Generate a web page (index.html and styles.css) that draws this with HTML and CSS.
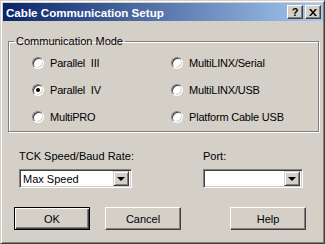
FILE: index.html
```html
<!DOCTYPE html>
<html lang="en">
<head>
  <meta charset="UTF-8">
  <title>Cable Communication Setup</title>
  <link rel="stylesheet" href="styles.css">
</head>
<body>
  <div class="window">
    <div class="titlebar">
      <span class="title">Cable Communication Setup</span>
      <div class="title-btns">
        <button class="cap-btn">?</button>
        <button class="cap-btn cap-close">
          <svg width="8" height="7" viewBox="0 0 8 7"><path d="M0 0h2l2 2.5L6 0h2L5 3.5 8 7H6L4 4.5 2 7H0l3-3.5z" fill="#000"/></svg>
        </button>
      </div>
    </div>

    <div class="content">
      <fieldset class="group">
        <legend>Communication Mode</legend>
        <div class="radio-grid">
          <label class="radio"><span class="dot"></span>Parallel&nbsp; III</label>
          <label class="radio"><span class="dot"></span>MultiLINX/Serial</label>
          <label class="radio"><span class="dot checked"></span>Parallel&nbsp; IV</label>
          <label class="radio"><span class="dot"></span>MultiLINX/USB</label>
          <label class="radio"><span class="dot"></span>MultiPRO</label>
          <label class="radio"><span class="dot"></span>Platform Cable USB</label>
        </div>
      </fieldset>

      <div class="fields">
        <div class="field field-speed">
          <div class="field-label">TCK Speed/Baud Rate:</div>
          <div class="combo combo-speed">
            <span class="combo-text">Max Speed</span>
            <span class="combo-arrow"></span>
          </div>
        </div>
        <div class="field field-port">
          <div class="field-label">Port:</div>
          <div class="combo combo-port">
            <span class="combo-text"></span>
            <span class="combo-arrow"></span>
          </div>
        </div>
      </div>

      <div class="buttons">
        <button class="btn btn-default">OK</button>
        <button class="btn">Cancel</button>
        <span class="spacer"></span>
        <button class="btn">Help</button>
      </div>
    </div>
  </div>
</body>
</html>
```

FILE: styles.css
```css
body {
  margin: 0;
  background: #d4d0c8;
  font-family: 'Liberation Sans', Arial, sans-serif;
  font-size: 11px;
  color: #000;
}
/* окно */
.window {
  width: 325px;
  height: 244px;
  box-sizing: border-box;
  background: #d4d0c8;
  border: 1px solid;
  border-color: #d4d0c8 #404040 #404040 #d4d0c8;
  box-shadow: inset 1px 1px #fff, inset -1px -1px #808080;
  padding: 2px 1px 1px 2px;
}
.titlebar {
  height: 18px;
  background: linear-gradient(to right, #0a246a, #a6caf0);
  display: flex;
  align-items: center;
  justify-content: space-between;
  padding: 0 2px 0 3px;
}
.title {
  color: #fff;
  font-weight: 700;
  font-size: 11.6px;
}
.title-btns {
  display: flex;
  gap: 2px;
}
.cap-btn {
  width: 16px;
  height: 14px;
  padding: 0;
  background: #d4d0c8;
  border: 1px solid;
  border-color: #fff #404040 #404040 #fff;
  box-shadow: inset -1px -1px #808080;
  font-family: 'Liberation Sans', Arial, sans-serif;
  font-weight: 700;
  font-size: 11px;
  line-height: 11px;
  display: flex;
  align-items: center;
  justify-content: center;
}
/* группа */
.content {
  padding: 0 4px 0 5px;
}
.group {
  margin: 14px 0 0 0;
  padding: 9px 0 3px 23px;
  border: 1px solid #808080;
  box-shadow: inset 1px 1px #fff, 1px 1px #fff;
  height: 97px;
  box-sizing: border-box;
}
.group legend {
  padding: 0 2px;
  margin-left: -18px;
}
.radio-grid {
  display: grid;
  grid-template-columns: 139px 1fr;
  row-gap: 14px;
}
.radio {
  display: flex;
  align-items: center;
  gap: 6px;
  height: 13px;
  letter-spacing: -0.2px;
}
.dot {
  width: 12px;
  height: 12px;
  box-sizing: border-box;
  border-radius: 50%;
  background: #fff;
  border: 1px solid;
  border-color: #808080 #fff #fff #808080;
  box-shadow: inset 1px 1px #404040, inset -1px -1px #d4d0c8;
  display: flex;
  align-items: center;
  justify-content: center;
}
.dot.checked::after {
  content: "";
  width: 4px;
  height: 4px;
  border-radius: 50%;
  background: #000;
}
/* поля */
.fields {
  display: flex;
  margin-top: 18px;
}
.field-speed {
  margin-left: 11px;
}
.field-port {
  margin-left: 69px;
}
.field-label {
  height: 14px;
  margin-bottom: 5px;
}
.combo {
  height: 19px;
  box-sizing: border-box;
  background: #fff;
  border: 1px solid;
  border-color: #808080 #fff #fff #808080;
  box-shadow: inset 1px 1px #404040, inset -1px -1px #d4d0c8;
  display: flex;
  align-items: center;
  padding: 2px;
}
.combo-speed { width: 113px; }
.combo-port { width: 100px; }
.combo-text {
  flex: 1;
  padding-left: 1px;
}
.combo-arrow {
  width: 16px;
  height: 15px;
  box-sizing: border-box;
  background: #d4d0c8;
  border: 1px solid;
  border-color: #d4d0c8 #404040 #404040 #d4d0c8;
  box-shadow: inset 1px 1px #fff, inset -1px -1px #808080;
  display: flex;
  align-items: center;
  justify-content: center;
}
.combo-arrow::after {
  content: "";
  border-left: 4px solid transparent;
  border-right: 4px solid transparent;
  border-top: 4px solid #000;
}
/* кнопки */
.buttons {
  display: flex;
  gap: 15px;
  margin-top: 19px;
  padding: 0 13px 0 6px;
}
.spacer { flex: 1; }
.btn {
  width: 76px;
  height: 23px;
  padding: 0;
  background: #d4d0c8;
  border: 1px solid;
  border-color: #fff #404040 #404040 #fff;
  box-shadow: inset -1px -1px #808080;
  font-family: 'Liberation Sans', Arial, sans-serif;
  font-size: 11px;
  color: #000;
}
.btn-default {
  border: 1px solid #000;
  box-shadow: inset 1px 1px #fff, inset -1px -1px #404040, inset -2px -2px #808080;
}
```
